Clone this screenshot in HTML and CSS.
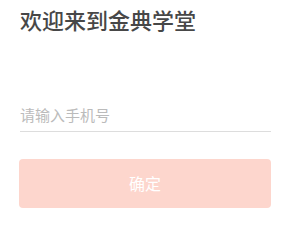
FILE: index.html
```html
<!DOCTYPE html>
<html lang="zh-CN">

<head>
  <meta charset="UTF-8">
  <meta name="viewport" content="width=device-width, initial-scale=1.0">
  <title>登录</title>
  <link rel="stylesheet" href="styles.css">
</head>

<body>
  <div class="login">
    <h1 class="welcome">欢迎来到金典学堂</h1>

    <div class="field">
      <input class="phone-input" type="tel" placeholder="请输入手机号">
    </div>

    <button class="submit-btn" disabled>确定</button>
  </div>
</body>

</html>
```

FILE: styles.css
```css
body {
  margin: 0;
  background: #fff;
  font-family: "Noto Sans CJK SC", "Noto Sans", sans-serif;
}

.login {
  padding: 8px 20px 0 20px;
}

.welcome {
  margin: 0;
  font-size: 22px;
  line-height: 22px;
  font-weight: 500;
  color: #474747;
}

.field {
  margin-top: 74px;
  padding-bottom: 5px;
  border-bottom: 1px solid #ddd;
  width: 251px;
}

.phone-input {
  display: block;
  width: 100%;
  box-sizing: border-box;
  border: none;
  outline: none;
  padding: 0;
  height: 22px;
  line-height: 22px;
  font-family: inherit;
  font-size: 15px;
  color: #333;
  background: transparent;
}

.phone-input::placeholder {
  color: #bbb;
}

.submit-btn {
  display: block;
  width: 252px;
  height: 49px;
  margin: 27px 0 0 -1px;
  border: none;
  border-radius: 4px;
  background: #fdd6cd;
  color: #fff;
  font-family: inherit;
  font-size: 16px;
  padding: 0 0 2px 0;
}
```
